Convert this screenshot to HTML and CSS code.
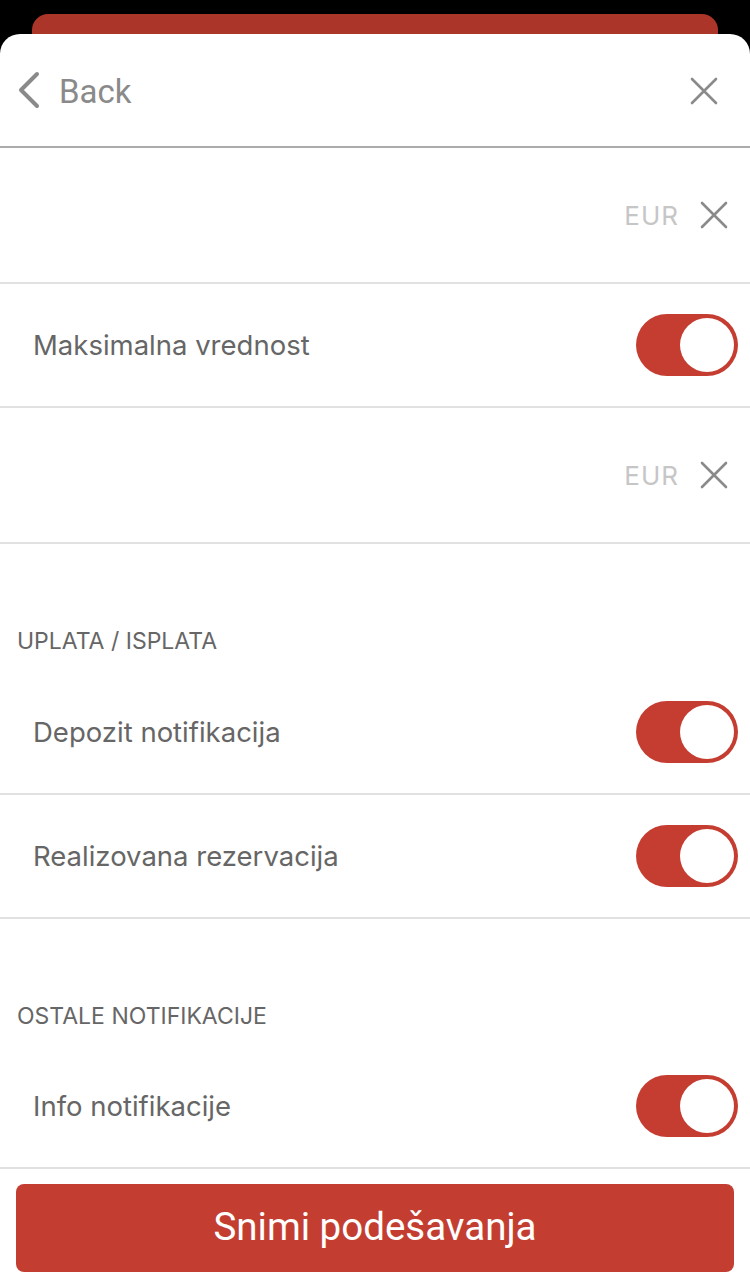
FILE: index.html
```html
<!DOCTYPE html>
<html lang="sr">
<head>
  <meta charset="UTF-8" />
  <meta name="viewport" content="width=device-width, initial-scale=1.0"/>
  <title>Podešavanja notifikacija</title>
  <link rel="stylesheet" href="styles.css">
</head>
<body>
  <div class="back-card"></div>

  <div class="sheet">
    <header class="top-bar">
      <a class="back" href="#">
        <svg class="chevron" viewBox="0 0 24 38" width="24" height="38">
          <path d="M20 3 L4 19 L20 35" fill="none" stroke="#8a8a8a" stroke-width="4" stroke-linecap="round" stroke-linejoin="round"/>
        </svg>
        <span>Back</span>
      </a>
      <svg class="close" viewBox="0 0 28 28" width="28" height="28">
        <path d="M2 2 L26 26 M26 2 L2 26" fill="none" stroke="#8a8a8a" stroke-width="2.6" stroke-linecap="round"/>
      </svg>
    </header>

    <div class="row amount">
      <span class="currency">EUR</span>
      <svg class="clear" viewBox="0 0 28 28" width="28" height="28">
        <path d="M2 2 L26 26 M26 2 L2 26" fill="none" stroke="#8a8a8a" stroke-width="2.6" stroke-linecap="round"/>
      </svg>
    </div>

    <div class="row">
      <span class="label">Maksimalna vrednost</span>
      <span class="toggle on"><span class="knob"></span></span>
    </div>

    <div class="row amount">
      <span class="currency">EUR</span>
      <svg class="clear" viewBox="0 0 28 28" width="28" height="28">
        <path d="M2 2 L26 26 M26 2 L2 26" fill="none" stroke="#8a8a8a" stroke-width="2.6" stroke-linecap="round"/>
      </svg>
    </div>

    <h4 class="section-title">UPLATA / ISPLATA</h4>

    <div class="row">
      <span class="label">Depozit notifikacija</span>
      <span class="toggle on"><span class="knob"></span></span>
    </div>

    <div class="row">
      <span class="label">Realizovana rezervacija</span>
      <span class="toggle on"><span class="knob"></span></span>
    </div>

    <h4 class="section-title second">OSTALE NOTIFIKACIJE</h4>

    <div class="row">
      <span class="label">Info notifikacije</span>
      <span class="toggle on"><span class="knob"></span></span>
    </div>

    <div class="actions">
      <button class="save-btn">Snimi podešavanja</button>
    </div>
  </div>
</body>
</html>
```

FILE: styles.css
```css
body {
  margin: 0;
  background-color: #000;
  font-family: Inter, "Noto Sans", sans-serif;
  overflow: hidden;
}
.back-card {
  height: 20px;
  margin: 14px 32px 0;
  background-color: #ab3529;
  border-radius: 16px 16px 0 0;
}
.sheet {
  background-color: #fff;
  border-radius: 20px 20px 0 0;
  min-height: 1254px;
}
.top-bar {
  height: 112px;
  display: flex;
  align-items: center;
  justify-content: space-between;
  padding: 0 32px 0 17px;
  border-bottom: 2px solid #ababab;
}
.back {
  display: flex;
  align-items: center;
  gap: 18px;
  color: #8a8a8a;
  text-decoration: none;
  font-family: Roboto, sans-serif;
  font-size: 33px;
}
.back span {
  margin-top: 2px;
}
.close {
  margin-top: 2px;
}
.row {
  height: 122px;
  display: flex;
  align-items: center;
  justify-content: space-between;
  padding: 0 12px 0 33px;
  border-bottom: 2px solid #e1e1e1;
}
.row.amount {
  height: 134px;
  justify-content: flex-end;
  padding-right: 22px;
}
.currency {
  color: #c6c6c6;
  font-size: 26px;
  letter-spacing: 1px;
  margin-right: 21px;
}
.label {
  color: #666;
  font-size: 27.5px;
}
.toggle {
  width: 102px;
  height: 62px;
  border-radius: 31px;
  background-color: #c53d30;
  display: flex;
  align-items: center;
  justify-content: flex-end;
  padding: 0 4px;
  box-sizing: border-box;
}
.knob {
  width: 54px;
  height: 54px;
  border-radius: 50%;
  background-color: #fff;
}
.section-title {
  margin: 0;
  padding: 82px 17px 15px;
  line-height: 30px;
  font-size: 23px;
  font-weight: normal;
  color: #666;
}
.section-title.second {
  padding-bottom: 14px;
}
.actions {
  padding: 15px 16px 0;
}
.save-btn {
  width: 100%;
  height: 88px;
  border: none;
  border-radius: 8px;
  background-color: #c33e31;
  color: #fff;
  font-family: Roboto, sans-serif;
  font-size: 38.5px;
  padding-bottom: 4px;
  cursor: pointer;
}
```
